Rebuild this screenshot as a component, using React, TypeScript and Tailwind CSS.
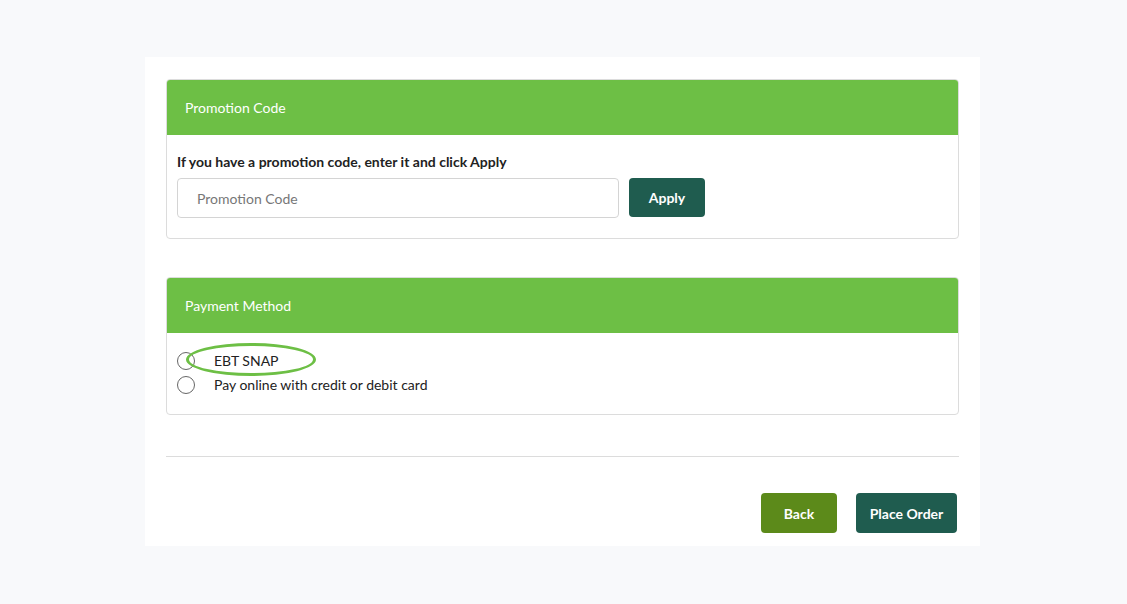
import { useState } from 'react'

export default function App() {
  const [method, setMethod] = useState('')
  const [code, setCode] = useState('')

  return (
    <div
      className="min-h-screen w-full bg-[#f8f9fb] pt-[57px]"
      style={{ fontFamily: 'Lato, "Open Sans", sans-serif' }}
    >
      <div className="ml-[145px] w-[835px] bg-white px-[21px] pt-[22px] pb-[13px]">
        {/* promotion */}
        <div className="rounded border border-[#dcdcdc] overflow-hidden">
          <div className="h-[55px] bg-[#6dbf45] px-[18px] flex items-center text-[14px] text-white">
            Promotion Code
          </div>
          <div className="px-[10px] pt-[18px] pb-[20px]">
            <label className="block text-[14px] font-bold text-[#222] leading-[18px] mb-[7px]">
              If you have a promotion code, enter it and click Apply
            </label>
            <div className="flex items-start gap-[10px]">
              <input
                value={code}
                onChange={(e) => setCode(e.target.value)}
                placeholder="Promotion Code"
                className="w-[442px] h-[40px] rounded border border-[#d4d4d4] px-[19px] text-[14px] text-[#333] placeholder:text-[#777] outline-none"
              />
              <button className="h-[39px] w-[76px] rounded bg-[#1f5c4f] text-white text-[14px] font-bold">
                Apply
              </button>
            </div>
          </div>
        </div>

        {/* payment */}
        <div className="mt-[38px] rounded border border-[#dcdcdc] overflow-hidden">
          <div className="h-[55px] bg-[#6dbf45] px-[18px] flex items-center text-[14px] text-white">
            Payment Method
          </div>
          <div className="px-[10px] pt-[18px] pb-[20px] flex flex-col gap-[5px]">
            {[
              { id: 'ebt', label: 'EBT SNAP' },
              { id: 'card', label: 'Pay online with credit or debit card' },
            ].map((o) => (
              <label key={o.id} className="relative flex items-center h-[19px] cursor-pointer">
                <span className="w-[18px] h-[18px] rounded-full border border-[#666] flex items-center justify-center shrink-0">
                  {method === o.id && <span className="w-[10px] h-[10px] rounded-full bg-[#1f5c4f]" />}
                </span>
                <input
                  type="radio"
                  name="method"
                  className="hidden"
                  checked={method === o.id}
                  onChange={() => setMethod(o.id)}
                />
                <span className="ml-[19px] text-[14px] text-[#222]">{o.label}</span>
                {o.id === 'ebt' && (
                  <span className="absolute left-[9px] top-[-8px] w-[130px] h-[33px] rounded-[50%] border-[3px] border-[#6dbf45] pointer-events-none" />
                )}
              </label>
            ))}
          </div>
        </div>

        <div className="mt-[41px] border-t border-[#dcdcdc]" />

        <div className="flex justify-end gap-[19px] pt-[36px] pr-[2px]">
          <button className="h-[40px] w-[76px] rounded bg-[#5c8a1a] text-white text-[14px] font-bold">
            Back
          </button>
          <button className="h-[40px] w-[101px] rounded bg-[#1f5c4f] text-white text-[14px] font-bold">
            Place Order
          </button>
        </div>
      </div>
    </div>
  )
}
